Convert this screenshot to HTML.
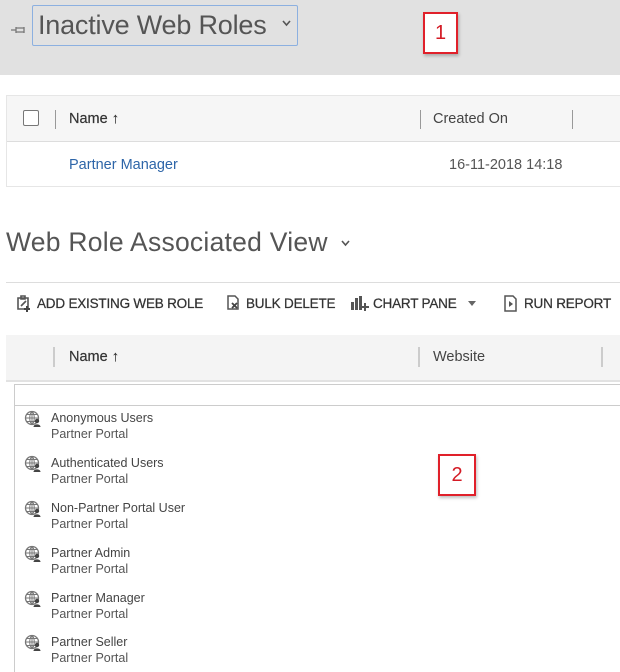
<!DOCTYPE html>
<html><head><meta charset="utf-8">
<style>
*{margin:0;padding:0;box-sizing:border-box}
body{width:620px;height:672px;background:#fff;font-family:"Liberation Sans",sans-serif;position:relative;overflow:hidden;color:#444}
.a{position:absolute;white-space:nowrap}
.hdr{left:0;top:0;width:620px;height:75px;background:#e1e1e1}
.red{border:2px solid #e0202a;background:#fff;color:#d41b25;font-size:20px;text-align:center;box-shadow:1px 2px 3px rgba(0,0,0,.25)}
.vs{width:1px;background:#999}
.tb{font-size:13.5px;color:#333;top:296px;letter-spacing:-0.2px;-webkit-text-stroke:0.25px #333}
.nm{font-size:12.5px;color:#444;left:51px}
.pp{font-size:12.5px;color:#555;left:51px}
</style></head><body>
<div class="a hdr"></div>
<svg class="a" style="left:10px;top:24px" width="18" height="12" viewBox="0 0 18 12"><path d="M1 6H6M6 3V9M6 4H14V8H6M14 3V9" stroke="#777" stroke-width="1.3" fill="none"/></svg>
<div class="a" style="left:32px;top:5px;width:266px;height:41px;border:1px solid #8cb0e0;border-radius:2px"></div>
<div class="a" style="left:38px;top:10px;font-size:27px;color:#555;letter-spacing:-0.2px">Inactive Web Roles</div>
<svg class="a" style="left:282px;top:20px" width="9" height="7"><path d="M1 1L4.5 5L8 1" stroke="#555" stroke-width="1.6" fill="none"/></svg>
<div class="a red" style="left:423px;top:12px;width:35px;height:42px;line-height:38px">1</div>

<div class="a" style="left:6px;top:95px;width:620px;height:92px;border:1px solid #e6e6e6;border-right:none"></div>
<div class="a" style="left:7px;top:96px;width:613px;height:46px;background:#f6f6f6;border-bottom:1px solid #ddd"></div>
<div class="a" style="left:23px;top:110px;width:16px;height:16px;border:1.5px solid #777;border-radius:2px;background:#fff"></div>
<div class="a vs" style="left:55px;top:110px;height:19px"></div>
<div class="a" style="left:69px;top:111px;font-size:14.5px;color:#333;-webkit-text-stroke:0.2px #333">Name ↑</div>
<div class="a vs" style="left:420px;top:110px;height:19px"></div>
<div class="a" style="left:433px;top:111px;font-size:14.5px;color:#444">Created On</div>
<div class="a vs" style="left:572px;top:110px;height:19px"></div>
<div class="a" style="left:69px;top:157px;font-size:14.5px;color:#2d65a8">Partner Manager</div>
<div class="a" style="left:449px;top:157px;font-size:14.5px;color:#555">16-11-2018 14:18</div>

<div class="a" style="left:6px;top:227px;font-size:26.5px;color:#555;letter-spacing:0.25px">Web Role Associated View</div>
<svg class="a" style="left:341px;top:240px" width="9" height="7"><path d="M1 1L4.5 5L8 1" stroke="#555" stroke-width="1.6" fill="none"/></svg>
<div class="a" style="left:6px;top:282px;width:614px;height:1px;background:#ddd"></div>

<svg class="a" style="left:15px;top:294px" width="18" height="18" viewBox="0 0 18 18"><path d="M3 4H13V15H3Z M6 2H10V5H6Z M6 12L11 7" stroke="#555" stroke-width="1.6" fill="none"/><path d="M12 12V18M9 15H15" stroke="#444" stroke-width="2"/></svg>
<div class="a tb" style="left:37px">ADD EXISTING WEB ROLE</div>
<svg class="a" style="left:225px;top:294px" width="16" height="18" viewBox="0 0 16 18"><path d="M3 2H10L13 5V15H3Z" stroke="#555" stroke-width="1.5" fill="none"/><path d="M7 9L12 14M12 9L7 14" stroke="#444" stroke-width="1.8"/></svg>
<div class="a tb" style="left:246px">BULK DELETE</div>
<svg class="a" style="left:350px;top:294px" width="20" height="18" viewBox="0 0 20 18"><rect x="1" y="8" width="3" height="8" fill="#555"/><rect x="5" y="4" width="3" height="12" fill="#555"/><rect x="9" y="2" width="3" height="14" fill="#555"/><path d="M15 9V17M11 13H19" stroke="#555" stroke-width="2"/></svg>
<div class="a tb" style="left:373px">CHART PANE</div>
<svg class="a" style="left:468px;top:301px" width="8" height="5"><path d="M0 0H8L4 5Z" fill="#666"/></svg>
<svg class="a" style="left:503px;top:295px" width="15" height="17" viewBox="0 0 15 17"><path d="M2 1H10L13 4V16H2Z" stroke="#555" stroke-width="1.5" fill="none"/><path d="M6 6L10 9L6 12Z" fill="#555"/></svg>
<div class="a tb" style="left:524px">RUN REPORT</div>

<div class="a" style="left:6px;top:335px;width:614px;height:47px;background:#f4f4f4;border-bottom:2px solid #e2e2e2"></div>
<div class="a" style="left:53px;top:347px;width:2px;height:20px;background:#ccc"></div>
<div class="a" style="left:69px;top:349px;font-size:14.5px;color:#333;-webkit-text-stroke:0.2px #333">Name ↑</div>
<div class="a" style="left:418px;top:347px;width:2px;height:20px;background:#ccc"></div>
<div class="a" style="left:433px;top:349px;font-size:14.5px;color:#444">Website</div>
<div class="a" style="left:601px;top:347px;width:2px;height:20px;background:#ccc"></div>
<div class="a" style="left:14px;top:384px;width:606px;height:22px;border:1px solid #ccc;border-right:none"></div>
<div class="a" style="left:14px;top:406px;width:1px;height:266px;background:#ccc"></div>

<div class="a red" style="left:438px;top:454px;width:38px;height:42px;line-height:38px">2</div>

<svg width="0" height="0" style="position:absolute"><defs><g id="g"><circle cx="8" cy="8" r="6.5" stroke="#777" stroke-width="1.3" fill="#fff"/><path d="M1.5 8H14.5M8 1.5V14.5M3 4.5H13M3 11.5H13M8 1.5C5 4 5 12 8 14.5M8 1.5C11 4 11 12 8 14.5" stroke="#777" stroke-width="1" fill="none"/><circle cx="13" cy="11" r="2.2" fill="#444"/><path d="M9.5 17C9.5 13.5 16.5 13.5 16.5 17Z" fill="#444"/></g></defs></svg>

<svg class="a" style="left:24px;top:410px" width="18" height="18"><use href="#g"/></svg>
<div class="a nm" style="top:411px">Anonymous Users</div><div class="a pp" style="top:427px">Partner Portal</div>
<svg class="a" style="left:24px;top:455px" width="18" height="18"><use href="#g"/></svg>
<div class="a nm" style="top:456px">Authenticated Users</div><div class="a pp" style="top:472px">Partner Portal</div>
<svg class="a" style="left:24px;top:500px" width="18" height="18"><use href="#g"/></svg>
<div class="a nm" style="top:501px">Non-Partner Portal User</div><div class="a pp" style="top:517px">Partner Portal</div>
<svg class="a" style="left:24px;top:545px" width="18" height="18"><use href="#g"/></svg>
<div class="a nm" style="top:546px">Partner Admin</div><div class="a pp" style="top:562px">Partner Portal</div>
<svg class="a" style="left:24px;top:590px" width="18" height="18"><use href="#g"/></svg>
<div class="a nm" style="top:591px">Partner Manager</div><div class="a pp" style="top:607px">Partner Portal</div>
<svg class="a" style="left:24px;top:634px" width="18" height="18"><use href="#g"/></svg>
<div class="a nm" style="top:635px">Partner Seller</div><div class="a pp" style="top:651px">Partner Portal</div>
</body></html>
